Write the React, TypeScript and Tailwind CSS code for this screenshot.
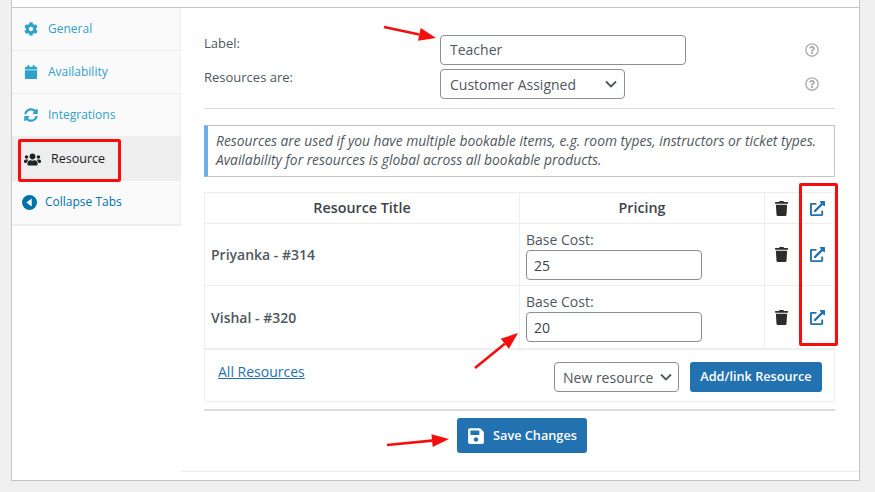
import React from "react";
import {
  FaCog,
  FaCalendar,
  FaSyncAlt,
  FaUsers,
  FaTrash,
  FaExternalLinkAlt,
  FaSave,
  FaRegQuestionCircle,
} from "react-icons/fa";

const Chevron = () => (
  <svg width="12" height="8" viewBox="0 0 12 8" fill="none" stroke="#50575e" strokeWidth="1.8">
    <path d="M1 1.5l5 5 5-5" />
  </svg>
);

// red annotation arrow, coords are page pixels
const Arrow = ({ x1, y1, x2, y2 }: { x1: number; y1: number; x2: number; y2: number }) => {
  const a = Math.atan2(y2 - y1, x2 - x1);
  const bx = x2 - Math.cos(a) * 17;
  const by = y2 - Math.sin(a) * 17;
  const nx = -Math.sin(a) * 6.5;
  const ny = Math.cos(a) * 6.5;
  return (
    <>
      <line x1={x1} y1={y1} x2={bx} y2={by} stroke="#f60d0d" strokeWidth="2.6" />
      <polygon points={`${x2},${y2} ${bx + nx},${by + ny} ${bx - nx},${by - ny}`} fill="#f60d0d" />
    </>
  );
};

const SideTab = ({ icon, label }: { icon: React.ReactNode; label: string }) => (
  <div className="flex h-[43px] items-center border-b border-[#eeeeee] pl-[12px] text-[12px] text-[#2ea2cc]">
    <span className="flex w-[24px] justify-start text-[14px] text-[#2ea2cc]">{icon}</span>
    <span>{label}</span>
  </div>
);

const Row = ({ title, cost, height }: { title: string; cost: string; height: string }) => (
  <div className={`flex border-t border-[#eeeeee] ${height}`}>
    <div className="flex w-[314px] items-center pl-[6px] text-[14px] font-semibold text-[#50575e]">{title}</div>
    <div className="w-[245px] border-l border-[#eeeeee] pl-[6px] pt-[7px]">
      <div className="text-[14px] leading-[18px] text-[#50575e]">Base Cost:</div>
      <div className="mt-[1px] flex h-[30px] w-[176px] items-center rounded-[4px] border border-[#8c8f94] pl-[7px] text-[14px] text-[#3c434a]">
        {cost}
      </div>
    </div>
    <div className="flex w-[36px] items-center justify-center border-l border-[#eeeeee] pr-[2px] text-[15px] text-[#2c2c2c]">
      <FaTrash />
    </div>
    <div className="flex flex-1 items-center justify-center border-l border-[#eeeeee] text-[15px] text-[#2271b1]">
      <FaExternalLinkAlt />
    </div>
  </div>
);

export default function App() {
  return (
    <div className="relative h-[492px] w-[875px] overflow-hidden bg-[#f0f0f1] font-['Open_Sans',sans-serif]">
      <div className="ml-[11px] h-[481px] w-[849px] border-x border-b border-[#c3c4c7] bg-white">
        <div className="h-[8px] border-b border-[#c3c4c7]" />
        <div className="flex">
          <div className="h-[218px] w-[169px] border-r border-b-2 border-[#eeeeee] bg-[#fafafa]">
            <SideTab icon={<FaCog />} label="General" />
            <SideTab icon={<FaCalendar />} label="Availability" />
            <SideTab icon={<FaSyncAlt />} label="Integrations" />
            <div className="flex h-[44px] items-center bg-[#eeeeee] pl-[12px] text-[12.5px] text-[#1d2327]">
              <span className="flex w-[27px] text-[17px]">
                <FaUsers />
              </span>
              <span>Resource</span>
            </div>
            <div className="flex h-[42px] items-center pl-[10px] text-[12px] text-[#0073aa]">
              <svg width="15" height="15" viewBox="0 0 15 15" className="mr-[8px] shrink-0">
                <circle cx="7.5" cy="7.5" r="7.5" fill="#0073aa" />
                <path d="M9.7 3.6v7.8L4.4 7.5z" fill="#fff" />
              </svg>
              <span>Collapse Tabs</span>
            </div>
          </div>

          <div className="h-[464px] flex-1 border-b border-[#eeeeee] pl-[23px] pr-[24px] pt-[27px]">
            <div className="border-b border-[#dcdcde] pb-[9px]">
              <div className="flex h-[31px] items-start">
                <div className="w-[236px] text-[13px] leading-[16px] text-[#50575e]">Label:</div>
                <div className="flex h-[30px] w-[246px] items-center rounded-[4px] border border-[#8c8f94] pb-[1px] pl-[9px] text-[14px] text-[#50575e]">
                  Teacher
                </div>
                <div className="ml-[119px] pt-[8px] text-[14px] text-[#aaaaaa]">
                  <FaRegQuestionCircle />
                </div>
              </div>
              <div className="mt-[3px] flex h-[30px] items-start">
                <div className="w-[236px] text-[13px] leading-[16px] text-[#50575e]">Resources are:</div>
                <div className="flex h-[30px] w-[185px] items-center justify-between rounded-[4px] border border-[#8c8f94] pl-[9px] pr-[7px] text-[14px] text-[#50575e]">
                  <span>Customer Assigned</span>
                  <Chevron />
                </div>
                <div className="ml-[180px] pt-[8px] text-[14px] text-[#aaaaaa]">
                  <FaRegQuestionCircle />
                </div>
              </div>
            </div>

            <div className="mt-[16px] h-[52px] whitespace-nowrap border border-[#c3c4c7] border-l-[4px] border-l-[#72aee6] pl-[8px] pt-[5px] text-[13.8px] italic leading-[19px] text-[#50575e]">
              <div>Resources are used if you have multiple bookable items, e.g. room types, instructors or ticket types.</div>
              <div>Availability for resources is global across all bookable products.</div>
            </div>

            <div className="mt-[15px] border-x border-b border-t border-[#eeeeee]">
              <div className="flex h-[30px]">
                <div className="flex w-[314px] items-center justify-center text-[14.3px] font-semibold text-[#3c434a]">Resource Title</div>
                <div className="flex w-[245px] items-center justify-center border-l border-[#eeeeee] text-[14.3px] font-semibold text-[#3c434a]">Pricing</div>
                <div className="flex w-[36px] items-center justify-center border-l border-[#eeeeee] pr-[2px] text-[15px] text-[#2c2c2c]">
                  <FaTrash />
                </div>
                <div className="flex flex-1 items-center justify-center border-l border-[#eeeeee] text-[15px] text-[#2271b1]">
                  <FaExternalLinkAlt />
                </div>
              </div>
              <Row title="Priyanka - #314" cost="25" height="h-[62px]" />
              <Row title="Vishal - #320" cost="20" height="h-[63px]" />
              <div className="flex h-[53px] items-center justify-between border-t-2 border-[#eeeeee] pl-[13px] pr-[12px] pt-[3px]">
                <a className="mb-[12px] text-[14px] text-[#2271b1] underline">All Resources</a>
                <div className="flex items-center gap-[11px]">
                  <div className="flex h-[30px] w-[125px] items-center justify-between rounded-[4px] border border-[#8c8f94] pl-[8px] pr-[6px] text-[14px] text-[#50575e]">
                    <span>New resource</span>
                    <Chevron />
                  </div>
                  <div className="flex h-[30px] w-[132px] items-center justify-center rounded-[3px] bg-[#2271b1] text-[12.7px] font-semibold text-white">
                    Add/link Resource
                  </div>
                </div>
              </div>
            </div>

            <div className="mt-[7px] border-t-2 border-[#dcdcde] pt-[7px]">
              <div className="ml-[253px] flex h-[35px] w-[130px] items-center justify-center gap-[8px] rounded-[3px] bg-[#2271b1] text-[12.7px] font-semibold text-white">
                <FaSave className="text-[18px]" />
                <span>Save Changes</span>
              </div>
            </div>
          </div>
        </div>
      </div>

      {/* annotations on top of the screenshot */}
      <div className="absolute left-[18px] top-[139px] h-[43px] w-[103px] rounded-[2px] border-[3px] border-[#f60d0d]" />
      <div className="absolute left-[799px] top-[183px] h-[163px] w-[39px] rounded-[2px] border-[3px] border-[#f60d0d]" />
      <svg className="absolute left-0 top-0" width="875" height="492">
        <Arrow x1={384} y1={27} x2={436} y2={38} />
        <Arrow x1={475} y1={368} x2={518} y2={333} />
        <Arrow x1={387} y1={445} x2={449} y2={439} />
      </svg>
    </div>
  );
}
